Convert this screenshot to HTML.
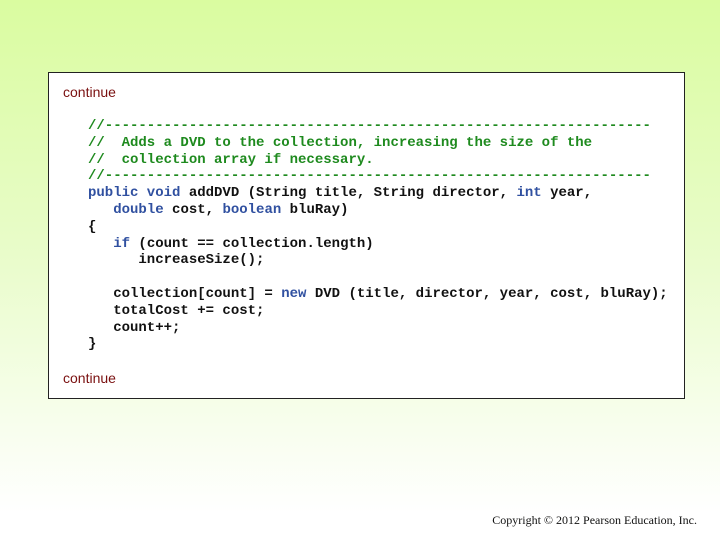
<!DOCTYPE html>
<html><head><style>
body{margin:0;width:720px;height:540px;background:linear-gradient(#dafca0 0%,#e8fcc8 45%,#fff 95%);position:relative;overflow:hidden;font-family:"Liberation Sans",sans-serif}
.box{position:absolute;left:48px;top:72px;width:635px;height:325px;background:#fff;border:1px solid #222}
.c{position:absolute;left:14px;color:#7a1010;font-size:14px}
pre{position:absolute;left:39px;top:45px;margin:0;font-family:"Liberation Mono",monospace;font-size:14px;font-weight:bold;line-height:16.8px;color:#111}
.g{color:#1e8a1e}.k{color:#3050a0}
.cp{position:absolute;right:23px;top:513px;font-family:"Liberation Serif",serif;font-size:12px;color:#111}
</style></head><body>
<div class="box">
<div class="c" style="top:11px">continue</div>
<pre><span class="g">//-----------------------------------------------------------------
//  Adds a DVD to the collection, increasing the size of the
//  collection array if necessary.
//-----------------------------------------------------------------</span>
<span class="k">public void</span> addDVD (String title, String director, <span class="k">int</span> year,
   <span class="k">double</span> cost, <span class="k">boolean</span> bluRay)
{
   <span class="k">if</span> (count == collection.length)
      increaseSize();

   collection[count] = <span class="k">new</span> DVD (title, director, year, cost, bluRay);
   totalCost += cost;
   count++;
}</pre>
<div class="c" style="top:297px">continue</div>
</div>
<div class="cp">Copyright © 2012 Pearson Education, Inc.</div>
</body></html>
